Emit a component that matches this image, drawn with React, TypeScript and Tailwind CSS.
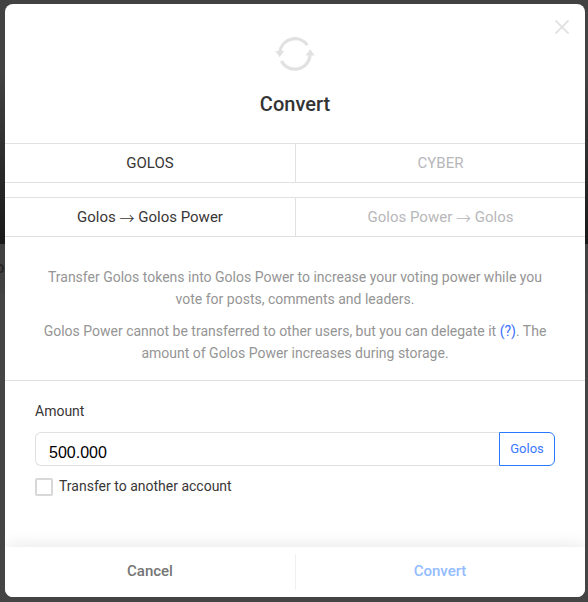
import { Fragment, useState } from "react";

function ConvertIcon() {
  return (
    <svg width="40" height="34" viewBox="0 0 40 34" fill="none" className="block">
      <path d="M4.9 14.6A15.2 15.2 0 0 1 32.4 8.2" stroke="#e1e1e1" strokeWidth="3.2" />
      <path d="M35.1 18A15.2 15.2 0 0 1 6.4 23.9" stroke="#e1e1e1" strokeWidth="3.2" />
      <path d="M0.3 14H9.2L4.6 20.2Z" fill="#e1e1e1" />
      <path d="M30.6 18.6H39.6L35.2 12.2Z" fill="#e1e1e1" />
    </svg>
  );
}

function Backdrop() {
  return (
    <div className="absolute inset-0 bg-[#444444]">
      <div className="h-[244px] bg-linear-to-b from-[#424242] from-30% to-[#191919]" />
      <div className="h-[50px] overflow-hidden bg-[#414141]">
        <div className="-ml-[5px] pt-[13px] text-[17px] leading-[20px] font-medium text-[#262626]">o</div>
      </div>
    </div>
  );
}

function Tabs({ items, active, onSelect }: { items: string[][]; active: number; onSelect: (i: number) => void }) {
  return (
    <div className="flex h-10 border-y border-[#e1e1e1]">
      {items.map((parts, i) => (
        <button
          key={parts.join("-")}
          onClick={() => onSelect(i)}
          className={`flex-1 text-[15px] leading-[38px] first:w-[291px] first:flex-none first:border-r first:border-[#e1e1e1] ${
            i === active ? "text-[#393636]" : "text-[#b7b7ba]"
          }`}
        >
          {parts.map((part, n) => (
            <Fragment key={n}>
              {n > 0 && (
                <>
                  {" "}
                  <span className="align-[-2px] font-['Noto_Sans_CJK_JP',sans-serif] leading-none font-light">→</span>{" "}
                </>
              )}
              {part}
            </Fragment>
          ))}
        </button>
      ))}
    </div>
  );
}

export default function App() {
  const [token, setToken] = useState(0);
  const [direction, setDirection] = useState(0);
  const [amount, setAmount] = useState("500.000");

  return (
    <div className="relative h-[602px] w-[588px] overflow-hidden pt-1 pl-[5px] font-['Roboto','Liberation_Sans',sans-serif]">
      <Backdrop />
      <div className="relative flex h-[593px] w-[580px] flex-col overflow-hidden rounded-lg bg-white">
        <button aria-label="Close" className="absolute top-4 right-4">
          <svg width="14" height="14" viewBox="0 0 14 14" className="block">
            <path d="M0.5 0.5L13.5 13.5M13.5 0.5L0.5 13.5" stroke="#e1e1e1" strokeWidth="1.8" />
          </svg>
        </button>
        <header className="flex h-[139px] flex-col items-center pt-[33px]">
          <ConvertIcon />
          <h1 className="mt-[21px] text-[20px] leading-6 font-medium text-[#333333]">Convert</h1>
        </header>
        <Tabs items={[["GOLOS"], ["CYBER"]]} active={token} onSelect={setToken} />
        <div className="h-[14px]" />
        <Tabs
          items={[
            ["Golos", "Golos Power"],
            ["Golos Power", "Golos"],
          ]}
          active={direction}
          onSelect={setDirection}
        />
        <section className="h-[144px] border-b border-[#e1e1e1] px-[30px] pt-[29px] text-center text-[14px] leading-[22px] text-[#959595]">
          <p>
            Transfer Golos tokens into Golos Power to increase your voting power while you
            <br />
            vote for posts, comments and leaders.
          </p>
          <p className="mt-[10px]">
            Golos Power cannot be transferred to other users, but you can delegate it{" "}
            <a className="text-[#3a6fff]">(?)</a>. The
            <br />
            amount of Golos Power increases during storage.
          </p>
        </section>
        <section className="flex-1 px-[30px] pt-5">
          <label className="block text-[14px] leading-5 text-[#393636]">Amount</label>
          <div className="mt-[11px] flex h-[34px]">
            <input
              value={amount}
              onChange={(e) => setAmount(e.target.value)}
              className="w-[464px] rounded-l-md border border-r-0 border-[#e1e1e1] px-[13px] pt-2 font-['Liberation_Sans',Arial,sans-serif] text-[16px] text-black outline-none"
            />
            <button className="w-14 rounded-r-md border border-[#2879ff] text-[13px] leading-8 text-[#3a78ff]">
              Golos
            </button>
          </div>
          <label className="mt-[10px] flex items-center text-[14px] leading-5 text-[#393636]">
            <span className="mt-[2px] mr-[6px] h-[18px] w-[18px] rounded-[2px] border-2 border-[#d8d8d8]" />
            Transfer to another account
          </label>
        </section>
        <footer className="flex h-[50px] items-center bg-white text-[15px] leading-5 font-medium shadow-[0_-2px_18px_0_rgba(0,0,0,0.09)]">
          <button className="h-9 w-[291px] border-r border-[#f0f0f0] pb-[3px] text-[#757575]">Cancel</button>
          <button className="h-9 flex-1 pr-px pb-[3px] text-[#93bcff]">Convert</button>
        </footer>
      </div>
    </div>
  );
}
